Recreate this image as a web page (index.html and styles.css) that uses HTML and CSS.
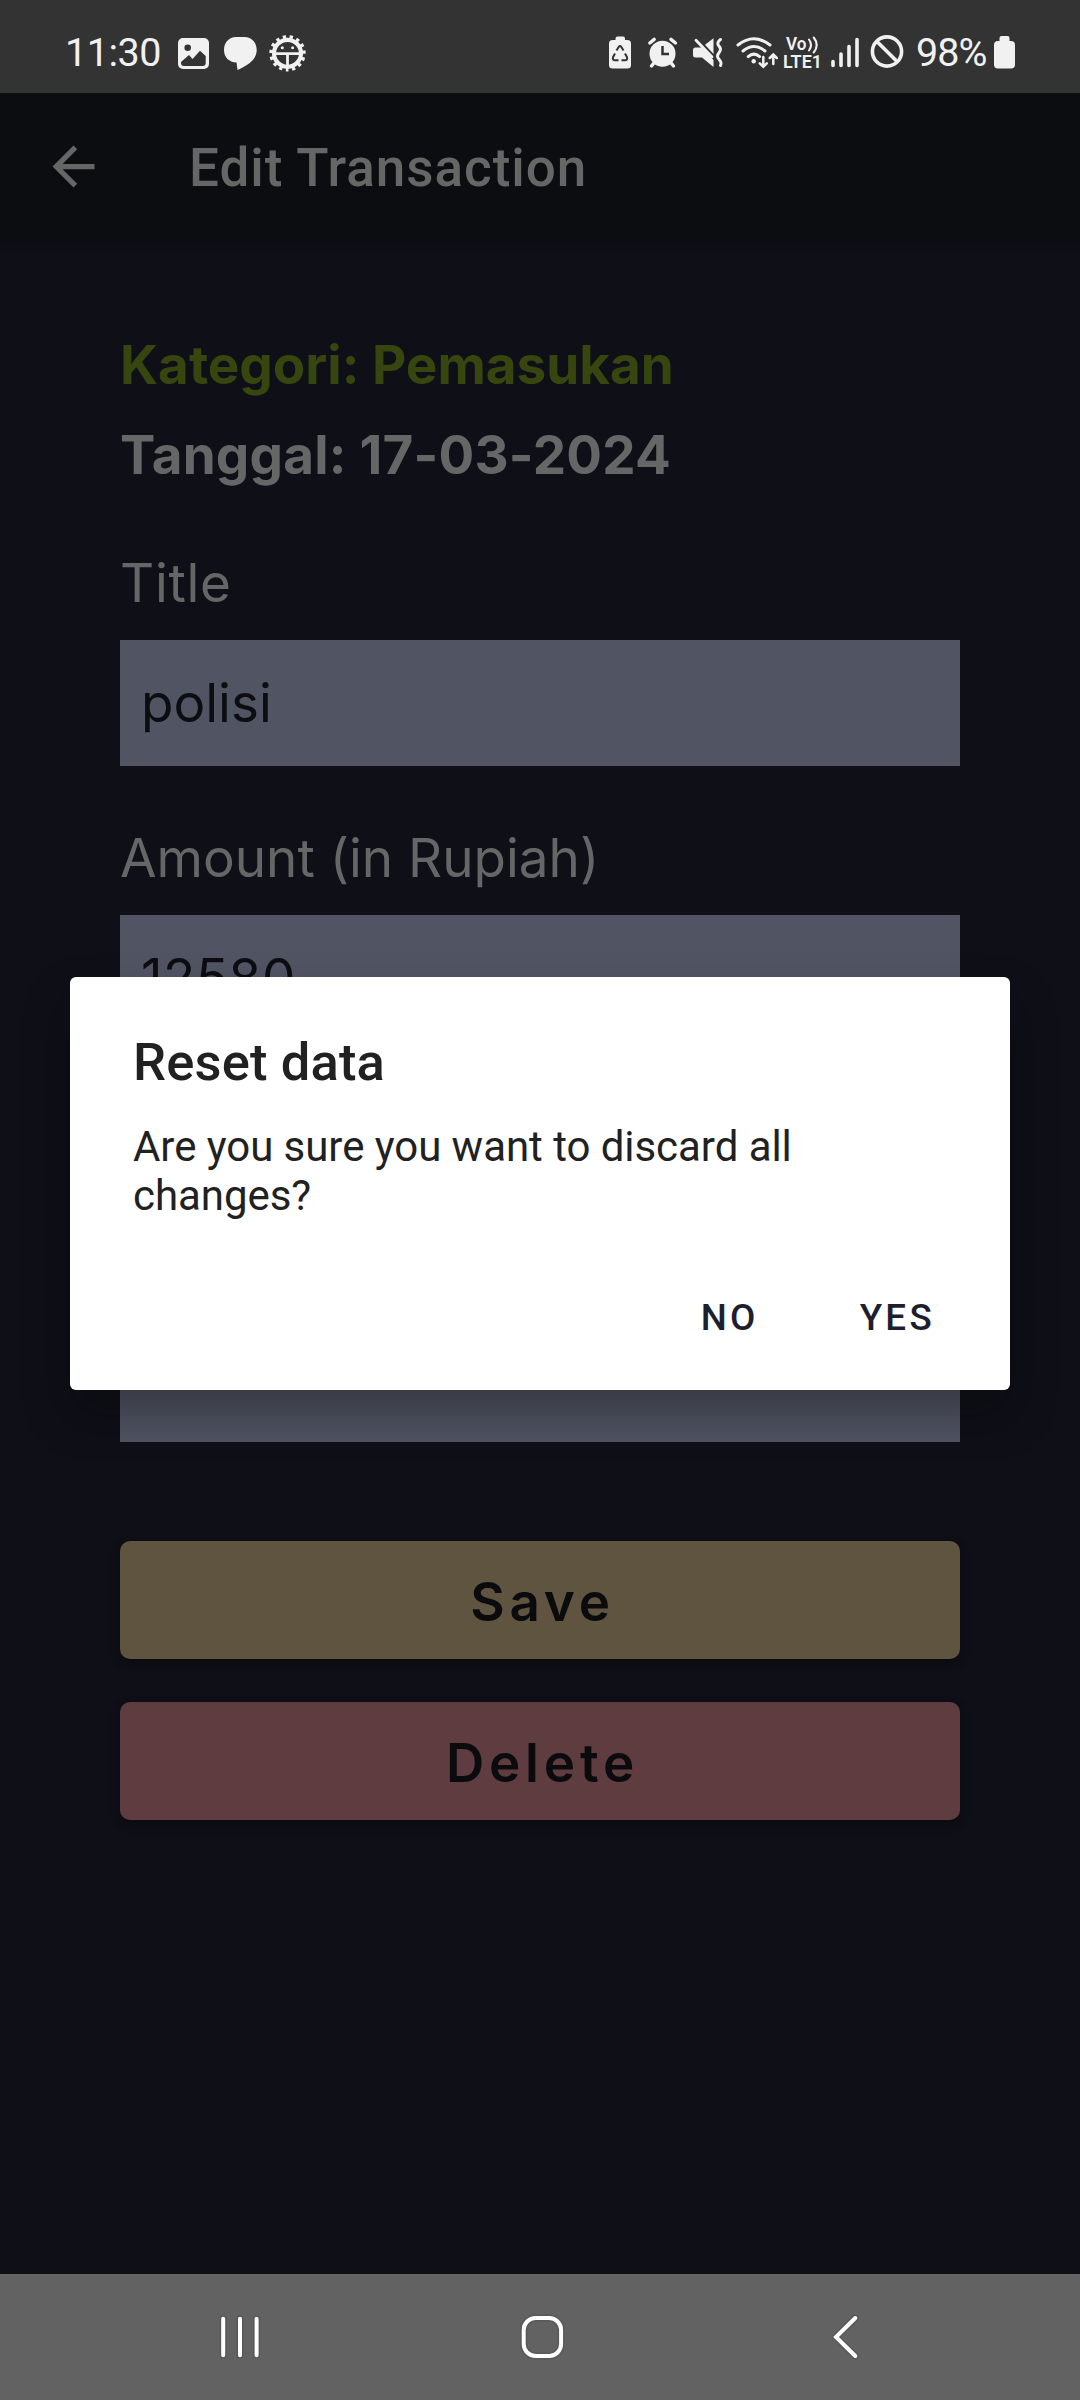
FILE: index.html
```html
<!DOCTYPE html>
<html lang="id">
<head>
<meta charset="utf-8">
<title>Edit Transaction</title>
<link rel="stylesheet" href="styles.css">
</head>
<body>
<div class="phone">
  <header class="status">
    <div class="status-group">
      <span class="clock">11:30</span>
      <svg class="icon" width="46" height="44" viewBox="174 30 46 44">
        <rect x="178" y="38" width="31" height="31" rx="5" fill="#f1f1f1"/>
        <circle cx="187.7" cy="47.7" r="3.3" fill="#333"/>
        <path d="M181 62l8-7 3.5 4 7.500-8.300 5.700 5.300v7q0 3-3 3h-18.700q-3 0-3-3z" fill="#333"/>
      </svg>
      <svg class="icon" width="46" height="44" viewBox="220 30 46 44">
        <path d="M236 37h9c7 0 11.700 6 11.700 13 0 9-8 15-19.200 20l-1-7.500C229 62 224 57.500 224 50c0-7.500 5-13 12-13z" fill="#f1f1f1"/>
      </svg>
      <svg class="icon" width="44" height="44" viewBox="266 30 44 44">
        <circle cx="287.500" cy="53.300" r="16.500" fill="none" stroke="#f1f1f1" stroke-width="3.400" stroke-dasharray="3.300 3.612" stroke-dashoffset="1.650" transform="rotate(90 287.500 53.300)"/>
        <circle cx="287.500" cy="53.300" r="13.500" fill="none" stroke="#f1f1f1" stroke-width="4.200"/>
        <path d="M274 53.600h27M287.500 53v13" stroke="#f1f1f1" stroke-width="2.800"/>
        <circle cx="282.300" cy="47.700" r="1.500" fill="#f1f1f1"/>
        <circle cx="292.600" cy="47.700" r="1.500" fill="#f1f1f1"/>
      </svg>
    </div>
    <div class="status-group">
      <svg class="icon" width="36" height="44" viewBox="604 30 36 44">
        <path d="M615.500 40v-1.500q0-2 2-2h5.500q2 0 2 2V40h2.500q3.500 0 3.500 3.500V65q0 3.500-3.500 3.500h-15Q609 68.500 609 65V43.500q0-3.500 3.500-3.500z" fill="#f1f1f1"/>
        <path d="M616.500 50.500l2.300-3.700q1.200-1.600 2.400 0l2.300 3.700M625 53.500l2 3.700q.8 3-2 3h-3.500M618.500 60.200h-3.500q-2.800 0-2-3l2-3.700" fill="none" stroke="#333" stroke-width="2"/>
      </svg>
      <svg class="icon" width="46" height="44" viewBox="640 30 46 44">
        <circle cx="662.500" cy="53.800" r="13" fill="#f1f1f1"/>
        <path d="M649.800 43l4.400-3.600M671 39.400l4.500 3.600M651.500 66l4-5M673.500 66l-4-5" stroke="#f1f1f1" stroke-width="3.400" stroke-linecap="round"/>
        <path d="M662.500 46v8h6.500" fill="none" stroke="#333" stroke-width="2.500"/>
      </svg>
      <svg class="icon" width="46" height="44" viewBox="686 30 46 44">
        <path d="M713.500 38.200v15.800l-8.500-9.300z" fill="#f1f1f1"/>
        <path d="M693 50q0-2.500 2.500-2.500h6l12 12.500v7l-11.500-9.500h-6.500q-2.500 0-2.500-2.500z" fill="#f1f1f1"/>
        <path d="M696 40.300l16 16.700" stroke="#f1f1f1" stroke-width="2.800" stroke-linecap="round"/>
        <path d="M720.500 39.500q-4.500 3.500-1.500 6.600t0 6.600 0 6.600 1.500 6.200" fill="none" stroke="#f1f1f1" stroke-width="3" stroke-linecap="round"/>
      </svg>
      <svg class="icon" width="50" height="44" viewBox="732 30 50 44">
        <path d="M738 45q15.800-12.500 32 0M743 51q11-9 22 0M748.200 56.600q5.800-5 11.400 0" fill="none" stroke="#f1f1f1" stroke-width="3" stroke-linecap="round"/>
        <circle cx="753.700" cy="61.200" r="2.200" fill="#f1f1f1"/>
        <path d="M763.300 57v9.500M759.800 63.300l3.500 3.500 3.500-3.500M773.300 64v-9.500M769.800 58l3.500-3.500 3.500 3.500" fill="none" stroke="#f1f1f1" stroke-width="2.500" stroke-linecap="round"/>
      </svg>
      <svg class="icon volte" width="46" height="44" viewBox="782 30 46 44">
        <text x="786" y="50" textLength="20.500" lengthAdjust="spacingAndGlyphs">Vo</text>
        <text x="783" y="68" textLength="39" lengthAdjust="spacingAndGlyphs">LTE1</text>
        <path d="M809 39.500q4 5.500 0 11M813.700 37.500q6 7.500 0 15" fill="none" stroke="#f1f1f1" stroke-width="2.100" stroke-linecap="round"/>
      </svg>
      <svg class="icon" width="38" height="44" viewBox="828 30 38 44">
        <path d="M833 61.500v4M841 54v11.500M849 46.500v19M857 39.500v26" stroke="#f1f1f1" stroke-width="3.600" stroke-linecap="round"/>
      </svg>
      <svg class="icon" width="42" height="44" viewBox="866 30 42 44">
        <circle cx="887" cy="51.500" r="14.600" fill="none" stroke="#f1f1f1" stroke-width="3.600"/>
        <path d="M876.700 41.200l20.600 20.600" stroke="#f1f1f1" stroke-width="3.600"/>
      </svg>
      <span class="percent">98%</span>
      <svg class="icon" width="26" height="44" viewBox="992 30 26 44">
        <path d="M999.500 41v-3q0-2 2-2h6q2 0 2 2v3h1.500q4 0 4 4v19.500q0 4-4 4h-13q-4 0-4-4V45q0-4 4-4z" fill="#f1f1f1"/>
      </svg>
    </div>
  </header>

  <div class="appbar">
    <svg width="63" height="63" viewBox="0 0 24 24"><path d="M20 11H7.830l5.590-5.590L12 4l-8 8 8 8 1.410-1.410L7.830 13H20v-2z" fill="#666"/></svg>
    <h1 class="appbar-title">Edit Transaction</h1>
  </div>

  <main class="form">
    <p class="meta category">Kategori: Pemasukan</p>
    <p class="meta date">Tanggal: 17-03-2024</p>
    <div class="field">
      <span class="label label-title">Title</span>
      <div class="input">polisi</div>
    </div>
    <div class="field">
      <span class="label">Amount (in Rupiah)</span>
      <div class="input amount">12580</div>
    </div>
    <div class="field field-note">
      <div class="input"></div>
    </div>
    <div class="button save">Save</div>
    <div class="button delete">Delete</div>
  </main>

  <nav class="navbar">
    <svg width="60" height="60" viewBox="210 2307 60 60"><path d="M223.200 2318.700v36.600M240 2318.700v36.600M256.600 2318.700v36.600" stroke="#585858" stroke-width="7" stroke-linecap="round"/><path d="M223.200 2318.700v36.600M240 2318.700v36.600M256.600 2318.700v36.600" stroke="#fff" stroke-width="4" stroke-linecap="round"/></svg>
    <svg width="60" height="60" viewBox="512.500 2307 60 60"><g fill="none"><rect x="523.200" y="2318" width="37.400" height="38" rx="12" stroke="#585858" stroke-width="7"/><rect x="523.200" y="2318" width="37.400" height="38" rx="12" stroke="#fff" stroke-width="4"/></g></svg>
    <svg width="60" height="60" viewBox="815 2307 60 60"><g fill="none" stroke-linecap="round"><path d="M855.300 2318l-19.300 19 19.300 19" stroke="#585858" stroke-width="7"/><path d="M855.300 2318l-19.300 19 19.300 19" stroke="#fff" stroke-width="4"/></g></svg>
  </nav>

  <div class="overlay">
    <section class="dialog">
      <h2 class="dialog-title">Reset data</h2>
      <p class="dialog-text">Are you sure you want to discard all changes?</p>
      <div class="dialog-actions"><span>NO</span><span>YES</span></div>
    </section>
  </div>
</div>
</body>
</html>
```
FILE: styles.css
```css
* { box-sizing: border-box; margin: 0; padding: 0; }
body { background: #0e0f17; }
.phone {
  position: relative;
  display: flex;
  flex-direction: column;
  width: 1080px;
  height: 2400px;
  overflow: hidden;
  background: #0e0f17;
  font-family: Inter, sans-serif;
}
.status {
  position: relative;
  z-index: 1;
  display: flex;
  justify-content: space-between;
  height: 93px;
  padding: 30px 62px 0 65px;
  background: #333;
  color: #f1f1f1;
  font-family: Roboto, sans-serif;
}
.status-group { display: flex; }
.icon { flex: none; display: block; }
.clock, .percent {
  height: 44px;
  font-size: 39.500px;
  line-height: 45px;
  white-space: nowrap;
}
.clock { width: 109px; letter-spacing: -.5px; }
.percent { width: 84px; padding-left: 8px; letter-spacing: -1px; }
.volte text { fill: #f1f1f1; font: 600 17.500px Roboto, sans-serif; }

.appbar {
  display: flex;
  align-items: center;
  height: 147px;
  padding-left: 42px;
  gap: 84px;
  background: #0b0d11;
  box-shadow: 0 2px 6px #0c0d11;
}
.appbar-title {
  padding-top: 3px;
  color: #666;
  font: 500 53px/62px Roboto, sans-serif;
  letter-spacing: .950px;
}

.form {
  display: flex;
  flex-direction: column;
  flex: 1;
  padding: 80px 120px 0;
  color: #666;
  font-size: 53px;
}
.meta { height: 90px; line-height: 90px; font-weight: 700; }
.category { color: #37460f; }
.date { letter-spacing: .2px; }
.field { margin-top: 38px; }
.label { display: block; height: 102px; line-height: 90px; }
.label-title { letter-spacing: .7px; }
.field + .field { margin-top: 47px; }
.input {
  height: 126px;
  padding-left: 21px;
  background: #515463;
  color: #0b0d10;
  line-height: 126px;
}
.amount { letter-spacing: .5px; }
.field + .field-note { margin-top: 149px; }
.field-note .input { height: 252px; }
.button {
  height: 118px;
  margin-top: 43px;
  padding-left: 5px;
  border-radius: 10px;
  box-shadow: 0 4px 8px #0b0c0f;
  color: #0b0b0e;
  font-weight: 600;
  letter-spacing: 4.800px;
  line-height: 122px;
  text-align: center;
}
.save { margin-top: 99px; background: #5f5440; }
.delete { background: #5f3c40; }

.navbar {
  display: flex;
  justify-content: space-between;
  align-items: center;
  height: 126px;
  padding: 0 205px 0 210px;
  background: #626262;
}

.overlay {
  position: absolute;
  inset: 93px 0 126px;
  display: flex;
  align-items: center;
  justify-content: center;
}
.dialog {
  width: 940px;
  height: 413px;
  padding: 54px 63px 0;
  border-radius: 6px;
  background: #fff;
  box-shadow: 0 24px 44px rgba(8, 10, 12, .36);
  color: #212121;
  font-family: Roboto, sans-serif;
}
.dialog-title { font-size: 52.500px; font-weight: 500; line-height: 62px; letter-spacing: .150px; }
.dialog-text { margin-top: 29px; font-size: 42px; line-height: 49px; letter-spacing: -.050px; }
.dialog-actions {
  display: flex;
  justify-content: flex-end;
  gap: 101px;
  margin-top: 76px;
  padding-right: 12px;
  color: #1e1f2e;
  font-size: 36.750px;
  font-weight: 500;
  letter-spacing: 3.300px;
  line-height: 44px;
}
```
